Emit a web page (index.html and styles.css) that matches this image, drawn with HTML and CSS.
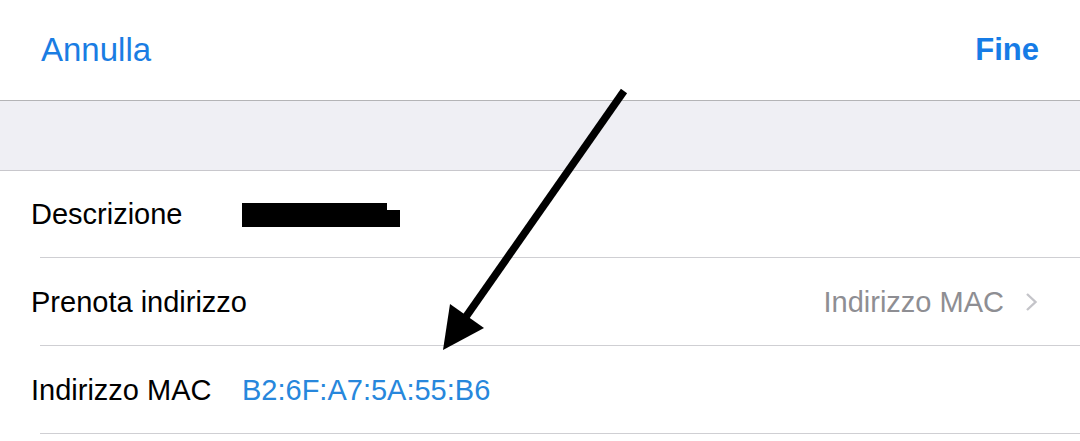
FILE: index.html
```html
<!DOCTYPE html>
<html lang="it">

<head>
  <meta charset="UTF-8">
  <meta name="viewport" content="width=device-width, initial-scale=1.0">
  <title>Dispositivo</title>
  <link rel="stylesheet" href="styles.css">
</head>

<body>
  <div id="screen">
    <div class="nav">
      <span class="nav-btn">Annulla</span>
      <span class="nav-btn done">Fine</span>
    </div>
    <div class="band"></div>
    <ul class="list">
      <li class="row">
        <span class="label">Descrizione</span>
        <span class="redact"><i class="r1"></i><i class="r2"></i></span>
      </li>
      <li class="row split">
        <span class="label">Prenota indirizzo</span>
        <span class="detail">Indirizzo MAC
          <svg class="chevron" width="13" height="20" viewBox="0 0 13 20">
            <path d="M2 2 L10.5 10 L2 18" fill="none" stroke="#c4c4c9" stroke-width="2.4" />
          </svg>
        </span>
      </li>
      <li class="row">
        <span class="label">Indirizzo MAC</span>
        <span class="mac">B2:6F:A7:5A:55:B6</span>
      </li>
    </ul>

    <!-- freccia disegnata sopra lo screenshot -->
    <svg class="arrow" width="1080" height="441" viewBox="0 0 1080 441">
      <line x1="624" y1="91" x2="463" y2="321" stroke="#000" stroke-width="7.5" />
      <polygon points="443,350 450,304 484,328" fill="#000" />
    </svg>
  </div>
</body>

</html>
```

FILE: styles.css
```css
* {
  margin: 0;
  padding: 0;
}

li {
  list-style: none;
}

body {
  background: #ffffff;
  font-family: "Liberation Sans", Arial, sans-serif;
  color: #000000;
}

#screen {
  position: relative;
  width: 1080px;
  height: 441px;
  overflow: hidden;
}

.nav {
  height: 100px;
  display: flex;
  justify-content: space-between;
  align-items: center;
  padding: 0 41px 0 41px;
  border-bottom: 1px solid #b4b4b6;
}

.nav-btn {
  font-size: 33px;
  color: #1a7de3;
}

.nav-btn.done {
  font-size: 31px;
  font-weight: bold;
  color: #167ce6;
}

.band {
  height: 69px;
  background: #efeff4;
  border-bottom: 1px solid #c8c7cc;
}

.row {
  height: 88px;
  display: flex;
  align-items: center;
  padding: 0 42px 0 31px;
  font-size: 29px;
  background: linear-gradient(#cfcfd3, #cfcfd3) no-repeat left 40px bottom / calc(100% - 40px) 1px;
}

.row:first-child {
  height: 87px;
}

.row .label {
  width: 211px;
  flex-shrink: 0;
}

.row.split {
  justify-content: space-between;
}

.row.split .label {
  width: auto;
}

.detail {
  display: flex;
  align-items: center;
  gap: 21px;
  color: #8e8e93;
}

.redact {
  display: flex;
  align-items: flex-end;
}

.redact i {
  display: block;
  background: #000000;
}

.r1 {
  width: 145px;
  height: 24px;
}

.r2 {
  width: 13px;
  height: 17px;
}

.mac {
  color: #2787dc;
}

.arrow {
  position: absolute;
  left: 0;
  top: 0;
}
```
